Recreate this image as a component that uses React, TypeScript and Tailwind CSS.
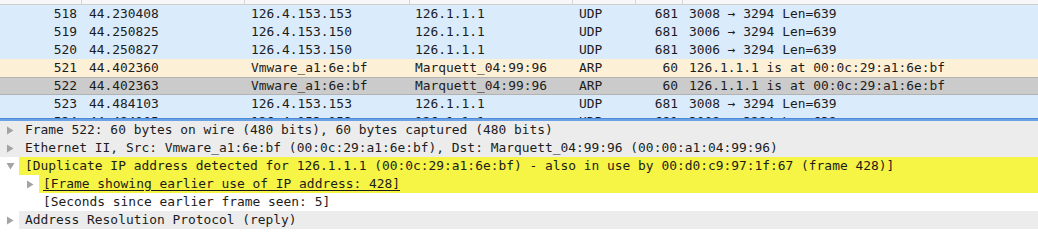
import React from "react";

type Pkt = { no: string; time: string; src: string; dst: string; proto: string; len: string; info: string; kind: "udp" | "arp" | "sel" };

const pkts: Pkt[] = [
  { no: "518", time: "44.230408", src: "126.4.153.153", dst: "126.1.1.1", proto: "UDP", len: "681", info: "3008 → 3294 Len=639", kind: "udp" },
  { no: "519", time: "44.250825", src: "126.4.153.150", dst: "126.1.1.1", proto: "UDP", len: "681", info: "3006 → 3294 Len=639", kind: "udp" },
  { no: "520", time: "44.250827", src: "126.4.153.150", dst: "126.1.1.1", proto: "UDP", len: "681", info: "3006 → 3294 Len=639", kind: "udp" },
  { no: "521", time: "44.402360", src: "Vmware_a1:6e:bf", dst: "Marquett_04:99:96", proto: "ARP", len: "60", info: "126.1.1.1 is at 00:0c:29:a1:6e:bf", kind: "arp" },
  { no: "522", time: "44.402363", src: "Vmware_a1:6e:bf", dst: "Marquett_04:99:96", proto: "ARP", len: "60", info: "126.1.1.1 is at 00:0c:29:a1:6e:bf", kind: "sel" },
  { no: "523", time: "44.484103", src: "126.4.153.153", dst: "126.1.1.1", proto: "UDP", len: "681", info: "3008 → 3294 Len=639", kind: "udp" },
  { no: "524", time: "44.484105", src: "126.4.153.153", dst: "126.1.1.1", proto: "UDP", len: "681", info: "3008 → 3294 Len=639", kind: "udp" },
];

const Right = () => (
  <svg width="8" height="9" viewBox="0 0 8 9" className="block">
    <path d="M1 0.5 L7.5 4.5 L1 8.5 Z" fill="#a3a3a3" />
  </svg>
);
const Down = () => (
  <svg width="9" height="8" viewBox="0 0 9 8" className="block">
    <path d="M0.5 1 L8.5 1 L4.5 7.5 Z" fill="#a3a3a3" />
  </svg>
);

function PacketRow({ p }: { p: Pkt }) {
  const bg =
    p.kind === "udp"
      ? "bg-[#daebfc]"
      : p.kind === "arp"
      ? "bg-[#fcf0d7]"
      : "bg-[#cbcbcb] border-y border-[#b3b3b3]";
  return (
    <div className={`flex h-[18px] items-center whitespace-nowrap ${bg}`}>
      <div className="w-[82px] pr-[5px] text-right">{p.no}</div>
      <div className="w-[163px] pl-[7px]">{p.time}</div>
      <div className="w-[165px] pl-[6px]">{p.src}</div>
      <div className="w-[163px] pl-[5px]">{p.dst}</div>
      <div className="w-[63px] pl-[6px]">{p.proto}</div>
      <div className="w-[47px] pr-[5px] text-right">{p.len}</div>
      <div className="flex-1 pl-[6px]">{p.info}</div>
    </div>
  );
}

export default function App() {
  return (
    <div
      className="w-[1038px] h-[240px] overflow-hidden bg-white text-[12.9px] leading-none text-[#1c1c1c]"
      style={{ fontFamily: '"DejaVu Sans Mono", "Liberation Mono", monospace' }}
    >
      <div className="h-[118px] overflow-hidden bg-[#daebfc]">
        <div className="flex h-[5px] bg-[#f7f7f7] border-b border-[#cfcfcf]">
          <div className="w-[82px] border-r border-[#d6d6d6]" />
          <div className="w-[163px] border-r border-[#d6d6d6]" />
          <div className="w-[165px] border-r border-[#d6d6d6]" />
          <div className="w-[163px] border-r border-[#d6d6d6]" />
          <div className="w-[63px] border-r border-[#d6d6d6]" />
          <div className="w-[47px] border-r border-[#d6d6d6]" />
          <div className="flex-1" />
        </div>
        {pkts.map((p) => (
          <PacketRow key={p.no} p={p} />
        ))}
      </div>
      <div className="h-[3px] bg-[#6aa2e6] border-t border-[#4d8bd8]" />
      <div className="flex flex-col">
        <div className="flex h-[18px] items-center bg-[#ececec] whitespace-nowrap">
          <div className="w-[19px] flex justify-center pl-[1px]"><Right /></div>
          <div className="pl-[6px]">Frame 522: 60 bytes on wire (480 bits), 60 bytes captured (480 bits)</div>
        </div>
        <div className="flex h-[18px] items-center bg-[#ececec] whitespace-nowrap">
          <div className="w-[19px] flex justify-center pl-[1px]"><Right /></div>
          <div className="pl-[6px]">Ethernet II, Src: Vmware_a1:6e:bf (00:0c:29:a1:6e:bf), Dst: Marquett_04:99:96 (00:00:a1:04:99:96)</div>
        </div>
        <div className="flex h-[18px] items-center whitespace-nowrap">
          <div className="w-[19px] flex justify-center pl-[1px]"><Down /></div>
          <div className="flex-1 h-full flex items-center bg-[#f6f445] pl-[6px]">
            [Duplicate IP address detected for 126.1.1.1 (00:0c:29:a1:6e:bf) - also in use by 00:d0:c9:97:1f:67 (frame 428)]
          </div>
        </div>
        <div className="flex h-[18px] items-center whitespace-nowrap">
          <div className="w-[19px]" />
          <div className="w-[20px] flex justify-center pl-[1px]"><Right /></div>
          <div className="flex-1 h-full flex items-center bg-[#f6f445] pl-[4px]">
            <span className="underline underline-offset-[2px]">[Frame showing earlier use of IP address: 428]</span>
          </div>
        </div>
        <div className="flex h-[18px] items-center whitespace-nowrap">
          <div className="w-[39px]" />
          <div className="pl-[4px]">[Seconds since earlier frame seen: 5]</div>
        </div>
        <div className="flex h-[18px] items-center whitespace-nowrap">
          <div className="w-[19px] flex justify-center pl-[1px]"><Right /></div>
          <div className="flex-1 h-full flex items-center bg-[#ececec] pl-[6px]">Address Resolution Protocol (reply)</div>
        </div>
      </div>
    </div>
  );
}
